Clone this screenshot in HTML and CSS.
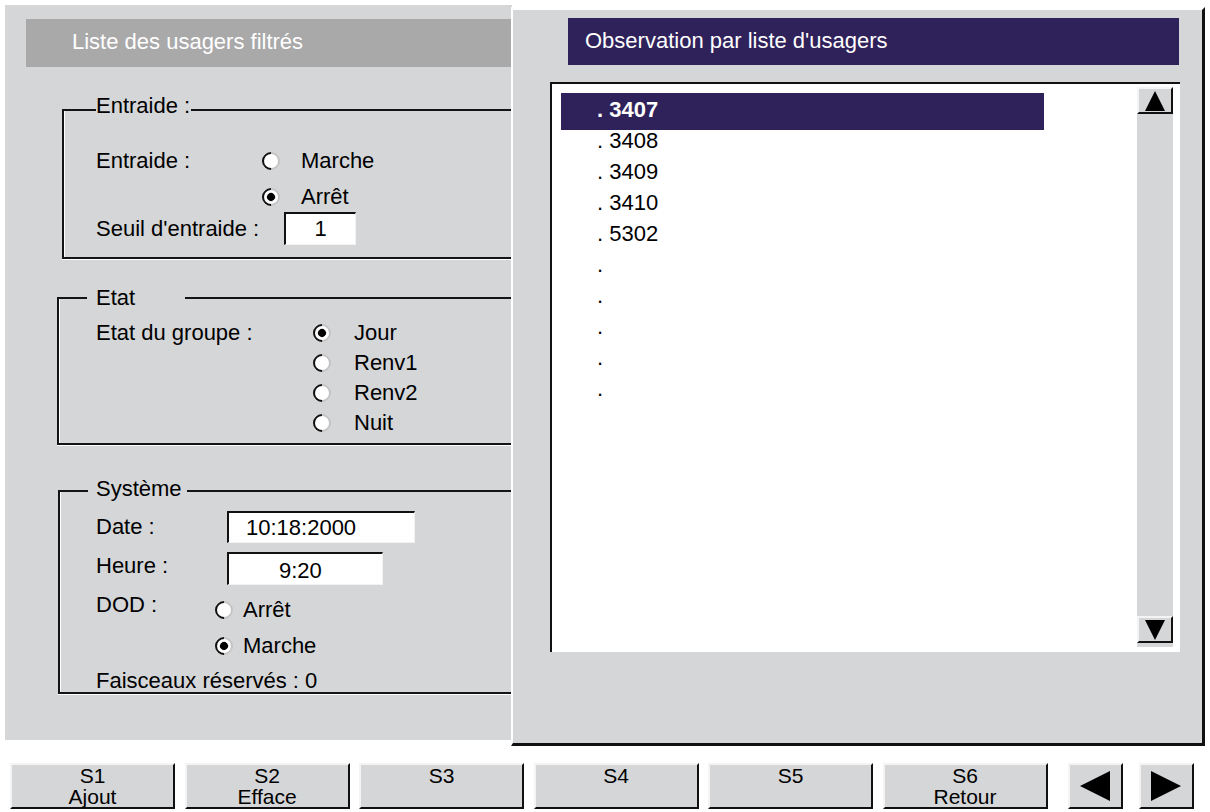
FILE: index.html
```html
<!DOCTYPE html>
<html lang="fr">
<head>
<meta charset="utf-8">
<title>Observation par liste d'usagers</title>
<link rel="stylesheet" href="styles.css">
</head>
<body>
<div class="screen">
  <div class="main-panel">
    <div class="panel-title">Liste des usagers filtrés</div>

    <div class="group g-entraide">
      <span class="legend">Entraide :</span>
      <div class="row h36">
        <span class="lbl w166">Entraide :</span>
        <span class="radio"></span><span class="opt m21">Marche</span>
      </div>
      <div class="row h36 ind166">
        <span class="radio on"></span><span class="opt m21">Arrêt</span>
      </div>
      <div class="row h33 up3">
        <span class="lbl w188">Seuil d'entraide :</span>
        <span class="field f-seuil">1</span>
      </div>
    </div>

    <div class="group g-etat">
      <span class="legend">Etat</span>
      <div class="row h30">
        <span class="lbl w217">Etat du groupe :</span>
        <span class="radio on"></span><span class="opt m23">Jour</span>
      </div>
      <div class="row h30 ind217"><span class="radio"></span><span class="opt m23">Renv1</span></div>
      <div class="row h30 ind217"><span class="radio"></span><span class="opt m23">Renv2</span></div>
      <div class="row h30 ind217"><span class="radio"></span><span class="opt m23">Nuit</span></div>
    </div>

    <div class="group g-systeme">
      <span class="legend">Système</span>
      <div class="row h32">
        <span class="lbl w131">Date :</span>
        <span class="field f-date">10:18:2000</span>
      </div>
      <div class="row h33 gap9">
        <span class="lbl w131 lift3">Heure :</span>
        <span class="field f-heure">9:20</span>
      </div>
      <div class="row h36 gap7">
        <span class="lbl w119 lift5">DOD :</span>
        <span class="radio"></span><span class="opt m10">Arrêt</span>
      </div>
      <div class="row h36 ind119">
        <span class="radio on"></span><span class="opt m10">Marche</span>
      </div>
      <div class="row-last">Faisceaux réservés : 0</div>
    </div>
  </div>

  <div class="softkeys">
    <div class="key"><span>S1</span><span>Ajout</span></div>
    <div class="key"><span>S2</span><span>Efface</span></div>
    <div class="key"><span>S3</span></div>
    <div class="key"><span>S4</span></div>
    <div class="key"><span>S5</span></div>
    <div class="key"><span>S6</span><span>Retour</span></div>
    <div class="key arrow first">
      <svg width="30" height="30" viewBox="0 0 30 30"><path d="M30 0 V30 L0 15 Z"/></svg>
    </div>
    <div class="key arrow">
      <svg width="30" height="30" viewBox="0 0 30 30"><path d="M0 0 V30 L30 15 Z"/></svg>
    </div>
  </div>

  <div class="popup">
    <div class="popup-title">Observation par liste d'usagers</div>
    <div class="listbox">
      <div class="items">
        <div class="item sel">. 3407</div>
        <div class="item">. 3408</div>
        <div class="item">. 3409</div>
        <div class="item">. 3410</div>
        <div class="item">. 5302</div>
        <div class="item">.</div>
        <div class="item">.</div>
        <div class="item">.</div>
        <div class="item">.</div>
        <div class="item">.</div>
      </div>
      <div class="scrollbar">
        <div class="sbtn up"><svg width="20" height="20" viewBox="0 0 20 20"><path d="M0 20 H20 L10 0 Z"/></svg></div>
        <div class="sbtn down"><svg width="20" height="20" viewBox="0 0 20 20"><path d="M0 0 H20 L10 20 Z"/></svg></div>
      </div>
    </div>
  </div>
</div>
</body>
</html>
```

FILE: styles.css
```css
* { box-sizing: border-box; }

body {
  margin: 0;
  background: #ffffff;
  font-family: "Liberation Sans", Arial, Helvetica, sans-serif;
  font-size: 22px;
  color: #000;
}

.screen {
  position: relative;
  width: 1210px;
  height: 812px;
  overflow: hidden;
}

/* ---------- left panel ---------- */
.main-panel {
  margin: 5px 0 0 5px;
  width: 507px;
  height: 735px;
  padding-top: 14px;
  background: #d5d6d8;
  overflow: hidden;
}

.panel-title {
  margin-left: 21px;
  height: 48px;
  line-height: 46px;
  padding-left: 46px;
  background: #a9a9aa;
  color: #fff;
}

.group {
  position: relative;
  width: 640px;
  border: 2px solid #141414;
  border-right: none;
  box-shadow: inset 1px 0 0 #fff, 0 1px 0 #fff;
}

.legend {
  position: absolute;
  line-height: 22px;
  background: #d5d6d8;
  white-space: nowrap;
}

.g-entraide {
  margin: 42px 0 0 57px;
  padding: 32px 0 12px 32px;
}
.g-entraide .legend { top: -16px; left: 32px; padding: 0 1px 0 0; }

.g-etat {
  margin: 38px 0 0 52px;
  padding: 19px 0 5px 37px;
}
.g-etat .legend { top: -12px; left: 28px; padding: 0 50px 0 9px; }

.g-systeme {
  margin: 45px 0 0 53px;
  padding: 19px 0 0 36px;
}
.g-systeme .legend { top: -14px; left: 28px; padding: 0 5px 0 8px; }

.row {
  display: flex;
  align-items: center;
  white-space: nowrap;
}
.h30 { height: 30px; }
.h32 { height: 32px; }
.h33 { height: 33px; }
.h36 { height: 36px; }
.up3 { margin-top: -3px; }
.gap7 { margin-top: 7px; }
.gap9 { margin-top: 9px; }
.ind119 { padding-left: 119px; }
.ind166 { padding-left: 166px; }
.ind217 { padding-left: 217px; }

.lbl { flex: none; }
.w119 { width: 119px; }
.w131 { width: 131px; }
.w166 { width: 166px; }
.w188 { width: 188px; }
.w217 { width: 217px; }
.lift3 { margin-bottom: 6px; }
.lift5 { margin-bottom: 10px; }

.opt { flex: none; }
.m10 { margin-left: 10px; }
.m21 { margin-left: 21px; }
.m23 { margin-left: 23px; }

.row-last {
  height: 28px;
  padding-top: 6px;
  line-height: 22px;
  white-space: nowrap;
}

/* radio buttons */
.radio {
  position: relative;
  flex: none;
  width: 18px;
  height: 18px;
  border-radius: 50%;
  background: #fff;
  border: 2px solid;
  border-color: #111 #c4c4c4 #c4c4c4 #111;
  transform: rotate(-45deg);
}
.radio.on::after {
  content: "";
  position: absolute;
  left: 50%;
  top: 50%;
  width: 8px;
  height: 8px;
  margin: -4px 0 0 -4px;
  border-radius: 50%;
  background: #000;
}

/* text fields */
.field {
  flex: none;
  height: 100%;
  background: #fff;
  border-top: 2px solid #111;
  border-left: 2px solid #111;
  border-right: 1px solid #f2f2f2;
  border-bottom: 1px solid #f2f2f2;
  display: flex;
  align-items: center;
}
.f-seuil { width: 72px; justify-content: center; }
.f-date { width: 188px; padding-left: 17px; }
.f-heure { width: 156px; padding-left: 50px; padding-top: 4px; }

/* ---------- soft keys ---------- */
.softkeys {
  display: flex;
  margin: 23px 0 0 10px;
  gap: 9.5px;
}

.key {
  width: 165px;
  height: 46px;
  display: flex;
  flex-direction: column;
  align-items: center;
  background: #d5d6d8;
  border: 2px solid;
  border-color: #f4f4f4 #111 #111 #f4f4f4;
  font-size: 21px;
  line-height: 21px;
}
.key span { display: block; height: 21px; }

.key.arrow {
  width: 55px;
  justify-content: center;
}
.key.arrow.first {
  margin-left: 10.5px;
  margin-right: 6.5px;
}
.key.arrow svg { display: block; fill: #000; }

/* ---------- popup ---------- */
.popup {
  position: absolute;
  left: 511px;
  top: 7px;
  width: 694px;
  height: 739px;
  background: #d5d6d8;
  border-top: 3px solid #fff;
  border-left: 2px solid #fff;
  border-right: 3px solid #111;
  border-bottom: 3px solid #111;
}

.popup-title {
  margin: 8px 0 0 55px;
  width: 611px;
  height: 47px;
  line-height: 46px;
  padding-left: 17px;
  background: #2f215a;
  color: #fff;
}

.listbox {
  display: flex;
  margin: 17px 0 0 37px;
  width: 630px;
  height: 570px;
  background: #fff;
  border-top: 2px solid #111;
  border-left: 2px solid #111;
}

.items {
  flex: 1;
  padding-top: 9px;
}

.item {
  margin-left: 9px;
  width: 483px;
  height: 31px;
  line-height: 31px;
  padding-left: 36px;
  white-space: nowrap;
}
.item.sel {
  height: 37px;
  line-height: 33px;
  margin-bottom: -5.5px;
  background: #2f215a;
  color: #fff;
  font-weight: bold;
}

.scrollbar {
  flex: none;
  width: 36px;
  margin: 3px 7px 5px 0;
  background: #d5d6d8;
  display: flex;
  flex-direction: column;
  justify-content: space-between;
}

.sbtn {
  height: 27px;
  display: flex;
  align-items: center;
  justify-content: center;
  border: 2px solid;
  border-color: #f4f4f4 #111 #111 #f4f4f4;
}
.sbtn.down { margin-bottom: 4px; }
.sbtn svg { display: block; fill: #000; }
```
